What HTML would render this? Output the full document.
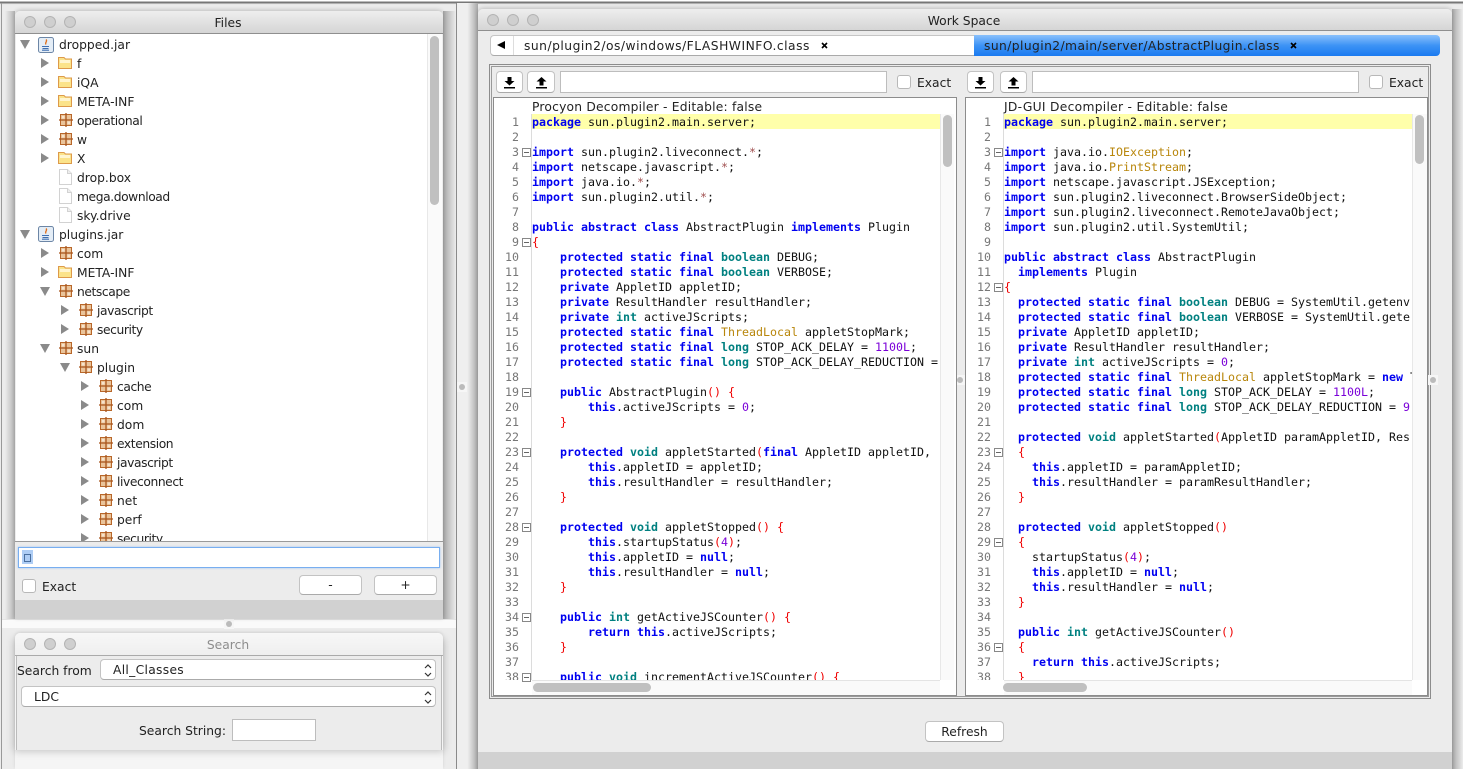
<!DOCTYPE html>
<html><head><meta charset="utf-8"><style>
html,body{margin:0;padding:0;width:1463px;height:769px;overflow:hidden;background:#ececec}
body{position:relative;font:12.3px "DejaVu Sans","Liberation Sans",sans-serif;color:#222}
.a{position:absolute;box-sizing:border-box}
.t{position:absolute;white-space:nowrap;line-height:16px}
.win{box-shadow:0 -1px 4px 0 rgba(0,0,0,.2)}
.bar{position:absolute;border-radius:5px 5px 0 0;background:linear-gradient(#eee,#d5d5d5);border-bottom:1px solid #8f8f8f;box-sizing:border-box}
.dot{position:absolute;width:12px;height:12px;border-radius:50%;background:#cfcfcf;border:1px solid #b4b4b4;box-sizing:border-box}
.btn{position:absolute;box-sizing:border-box;background:#fff;border:1px solid #c3c3c3;border-bottom-color:#aaa;border-radius:4px;text-align:center;line-height:18px}
.inp{position:absolute;box-sizing:border-box;background:#fff;border:1px solid #bdbdbd}
.cb{position:absolute;box-sizing:border-box;width:14px;height:14px;background:#fff;border:1px solid #b8b8b8;border-radius:3px}
.r{position:absolute;height:19px;line-height:19px;white-space:nowrap;margin-top:1px}
.n{letter-spacing:-.42px}
.ar{position:absolute;width:0;height:0;border-left:8px solid #8a8a8a;border-top:5px solid transparent;border-bottom:5px solid transparent}
.dn{position:absolute;width:0;height:0;border-top:9px solid #8a8a8a;border-left:5.5px solid transparent;border-right:5.5px solid transparent}
svg{position:absolute;overflow:visible}
pre{position:absolute;margin:0;font:11.63px/15px "DejaVu Sans Mono","Liberation Mono",monospace;color:#111;overflow:hidden;white-space:pre}
.g{color:#777;text-align:right}
b{color:#0000f0}
b.y{color:#008080}
i{font-style:normal;color:#b8860b}
u{text-decoration:none;color:#f00000}
s{text-decoration:none;color:#7a00d8}
em{font-style:normal;color:#a05050}
.f{position:absolute;width:9px;height:9px;box-sizing:border-box;border:1px solid #888;background:#fff}
.f:after{content:"";position:absolute;left:1px;top:3px;width:5px;height:1px;background:#666}
.sp{position:absolute;width:10px;height:10px;background:#f6f6f6}
.sp:after{content:"";position:absolute;left:2px;top:2px;width:6px;height:6px;border-radius:50%;background:#bbb}
</style></head><body>
<svg width="0" height="0" style="position:absolute"><defs>
<g id="pkg"><rect x="1.5" y="1.5" width="11" height="11" fill="#eac49a" stroke="#b8672a"/><path d="M7 0V14M0 7H14" stroke="#a8551c" stroke-width="1.3" fill="none"/><rect x="3" y="3" width="2.5" height="2.5" fill="#f7e3cc"/><rect x="8.5" y="8.5" width="2.5" height="2.5" fill="#f7e3cc"/></g>
<g id="fol"><path d="M.5 2.5H6L7.5 4H13.5V13.5H.5Z" fill="#fbe38a" stroke="#dd9a4a"/><rect x="2" y="5" width="10" height="3" fill="#fff5cf"/></g>
<g id="doc"><path d="M1.5 .5H9.5L13.5 4.5V15.5H1.5Z" fill="#fff" stroke="#d2d2d2"/><path d="M9.5 .5V4.5H13.5" fill="#eee" stroke="#d2d2d2"/></g>
<g id="jar"><rect x=".5" y=".5" width="15" height="15" rx="2" fill="#e4edf6" stroke="#6c86a6"/><path d="M8 2.5C10 4.5 6.5 5 8 7.5" stroke="#e0701c" stroke-width="1.3" fill="none"/><path d="M4 9.5H11M4.5 11.5H10.5M4 13.2H11" stroke="#3f6fb0" stroke-width="1.1" fill="none"/></g>
<g id="dl"><path d="M5.5 1H9.5V5H12.5L7.5 9.5L2.5 5H5.5ZM2 11H13V12.5H2Z" fill="#000"/></g>
<g id="ul"><path d="M7.5 1L12.5 5.5H9.5V9.5H5.5V5.5H2.5ZM2 11H13V12.5H2Z" fill="#000"/></g>
<g id="ud"><path d="M1 4L4 1L7 4M1 9L4 12L7 9" stroke="#333" stroke-width="1.2" fill="none"/></g>
</defs></svg>

<!-- backdrop -->
<div class="a" style="left:0;top:0;width:1463px;height:5px;background:linear-gradient(#fff 0,#fff 1px,#777 2px,#777 3px,#e8e8e8 4px)"></div>
<div class="a" style="left:1px;top:3px;width:1px;height:766px;background:#999"></div>
<div class="a" style="left:5px;top:11px;width:10px;height:608px;background:linear-gradient(90deg,#ececec,#b4b4b4)"></div>
<div class="a" style="left:443px;top:11px;width:13px;height:608px;background:linear-gradient(90deg,#a6a6a6,#ececec)"></div>
<div class="a" style="left:456px;top:3px;width:1px;height:766px;background:#8a8a8a"></div>
<div class="a" style="left:457px;top:3px;width:21px;height:766px;background:linear-gradient(90deg,#efefef 50%,#a8a8a8)"></div>
<div class="a" style="left:1452px;top:9px;width:11px;height:760px;background:linear-gradient(90deg,#a8a8a8,#ececec)"></div>
<div class="a" style="left:2px;top:619px;width:454px;height:9px;background:#fafafa;border-top:1px solid #e4e4e4"></div>
<div class="sp" style="left:224px;top:619px"></div>
<div class="sp" style="left:457px;top:382px"></div>

<!-- FILES WINDOW -->
<div class="a win" style="left:15px;top:11px;width:428px;height:608px;background:#ececec;border-radius:5px 5px 0 0"></div>
<div class="bar" style="left:15px;top:11px;width:428px;height:23px"></div>
<div class="dot" style="left:24px;top:16px"></div><div class="dot" style="left:44px;top:16px"></div><div class="dot" style="left:64px;top:16px"></div>
<div class="t" style="left:15px;width:426px;text-align:center;top:15px">Files</div>
<div class="a" style="left:16px;top:34px;width:426px;height:507px;background:#fff;overflow:hidden">
<div class="a" style="left:411px;top:0;width:15px;height:507px;background:#fafafa;border-left:1px solid #e8e8e8"></div>
<div class="a" style="left:414px;top:2px;width:9px;height:169px;background:#c0c0c0;border-radius:5px"></div>
<div style="position:absolute;left:-16px;top:-34px;width:426px;height:600px">
<div class="dn" style="left:20px;top:40px"></div><svg style="left:38px;top:37px" width="16" height="16"><use href="#jar"/></svg><div class="r" style="left:59px;top:35px">dropped.jar</div>
<div class="ar" style="left:41px;top:58px"></div><svg style="left:58px;top:55px" width="15" height="16"><use href="#fol"/></svg><div class="r" style="left:77px;top:54px">f</div>
<div class="ar" style="left:41px;top:77px"></div><svg style="left:58px;top:74px" width="15" height="16"><use href="#fol"/></svg><div class="r" style="left:77px;top:73px">iQA</div>
<div class="ar" style="left:41px;top:96px"></div><svg style="left:58px;top:93px" width="15" height="16"><use href="#fol"/></svg><div class="r" style="left:77px;top:92px">META-INF</div>
<div class="ar" style="left:41px;top:115px"></div><svg style="left:59px;top:113px" width="14" height="14"><use href="#pkg"/></svg><div class="r n" style="left:77px;top:111px">operational</div>
<div class="ar" style="left:41px;top:134px"></div><svg style="left:59px;top:132px" width="14" height="14"><use href="#pkg"/></svg><div class="r" style="left:77px;top:130px">w</div>
<div class="ar" style="left:41px;top:153px"></div><svg style="left:58px;top:150px" width="15" height="16"><use href="#fol"/></svg><div class="r" style="left:77px;top:149px">X</div>
<svg style="left:58px;top:169px" width="15" height="16"><use href="#doc"/></svg><div class="r" style="left:77px;top:168px">drop.box</div>
<svg style="left:58px;top:188px" width="15" height="16"><use href="#doc"/></svg><div class="r n" style="left:77px;top:187px">mega.download</div>
<svg style="left:58px;top:207px" width="15" height="16"><use href="#doc"/></svg><div class="r" style="left:77px;top:206px">sky.drive</div>
<div class="dn" style="left:20px;top:230px"></div><svg style="left:38px;top:226px" width="16" height="16"><use href="#jar"/></svg><div class="r" style="left:59px;top:225px">plugins.jar</div>
<div class="ar" style="left:41px;top:248px"></div><svg style="left:59px;top:246px" width="14" height="14"><use href="#pkg"/></svg><div class="r" style="left:77px;top:244px">com</div>
<div class="ar" style="left:41px;top:267px"></div><svg style="left:58px;top:264px" width="15" height="16"><use href="#fol"/></svg><div class="r" style="left:77px;top:263px">META-INF</div>
<div class="dn" style="left:40px;top:287px"></div><svg style="left:59px;top:284px" width="14" height="14"><use href="#pkg"/></svg><div class="r n" style="left:77px;top:282px">netscape</div>
<div class="ar" style="left:61px;top:305px"></div><svg style="left:79px;top:303px" width="14" height="14"><use href="#pkg"/></svg><div class="r n" style="left:97px;top:301px">javascript</div>
<div class="ar" style="left:61px;top:324px"></div><svg style="left:79px;top:322px" width="14" height="14"><use href="#pkg"/></svg><div class="r n" style="left:97px;top:320px">security</div>
<div class="dn" style="left:40px;top:344px"></div><svg style="left:59px;top:341px" width="14" height="14"><use href="#pkg"/></svg><div class="r" style="left:77px;top:339px">sun</div>
<div class="dn" style="left:60px;top:363px"></div><svg style="left:79px;top:360px" width="14" height="14"><use href="#pkg"/></svg><div class="r" style="left:97px;top:358px">plugin</div>
<div class="ar" style="left:81px;top:381px"></div><svg style="left:99px;top:379px" width="14" height="14"><use href="#pkg"/></svg><div class="r n" style="left:117px;top:377px">cache</div>
<div class="ar" style="left:81px;top:400px"></div><svg style="left:99px;top:398px" width="14" height="14"><use href="#pkg"/></svg><div class="r" style="left:117px;top:396px">com</div>
<div class="ar" style="left:81px;top:419px"></div><svg style="left:99px;top:417px" width="14" height="14"><use href="#pkg"/></svg><div class="r" style="left:117px;top:415px">dom</div>
<div class="ar" style="left:81px;top:438px"></div><svg style="left:99px;top:436px" width="14" height="14"><use href="#pkg"/></svg><div class="r n" style="left:117px;top:434px">extension</div>
<div class="ar" style="left:81px;top:457px"></div><svg style="left:99px;top:455px" width="14" height="14"><use href="#pkg"/></svg><div class="r n" style="left:117px;top:453px">javascript</div>
<div class="ar" style="left:81px;top:476px"></div><svg style="left:99px;top:474px" width="14" height="14"><use href="#pkg"/></svg><div class="r n" style="left:117px;top:472px">liveconnect</div>
<div class="ar" style="left:81px;top:495px"></div><svg style="left:99px;top:493px" width="14" height="14"><use href="#pkg"/></svg><div class="r" style="left:117px;top:491px">net</div>
<div class="ar" style="left:81px;top:514px"></div><svg style="left:99px;top:512px" width="14" height="14"><use href="#pkg"/></svg><div class="r" style="left:117px;top:510px">perf</div>
<div class="ar" style="left:81px;top:533px"></div><svg style="left:99px;top:531px" width="14" height="14"><use href="#pkg"/></svg><div class="r n" style="left:117px;top:529px">security</div>
</div></div>
<div class="a" style="left:15px;top:541px;width:428px;height:1px;background:#9a9a9a"></div>
<div class="a" style="left:18px;top:547px;width:422px;height:21px;background:#fff;border:1px solid #78aef0;box-shadow:0 0 2px #9cc4f5"></div>
<div class="a" style="left:22px;top:550px;width:11px;height:14px;background:#aecdf5"></div>
<div class="a" style="left:24px;top:554px;width:7px;height:8px;border:1px solid #4a6f9f"></div>
<div class="cb" style="left:22px;top:579px"></div>
<div class="t" style="left:42px;top:579px">Exact</div>
<div class="btn" style="left:299px;top:575px;width:63px;height:20px">-</div>
<div class="btn" style="left:374px;top:575px;width:63px;height:20px">+</div>
<div class="a" style="left:15px;top:600px;width:428px;height:19px;background:#d1d1d1"></div>

<!-- SEARCH WINDOW -->
<div class="a" style="left:15px;top:633px;width:428px;height:136px;background:#f5f5f5;border-radius:5px 5px 0 0;box-shadow:0 -1px 3px rgba(0,0,0,.1)"></div>
<div class="a" style="left:15px;top:640px;width:428px;height:110px;box-shadow:0 0 8px 1px rgba(0,0,0,.22)"></div>
<div class="bar" style="left:15px;top:633px;width:428px;height:23px;background:linear-gradient(#f7f7f7,#efefef);border-bottom:1px solid #aaa"></div>
<div class="dot" style="left:24px;top:638px"></div><div class="dot" style="left:44px;top:638px"></div><div class="dot" style="left:64px;top:638px"></div>
<div class="t" style="left:15px;width:426px;text-align:center;top:637px;color:#8d8d8d">Search</div>
<div class="a" style="left:16px;top:656px;width:426px;height:94px;background:#ececec;border-left:1px solid #bbb;border-right:1px solid #bbb"></div>
<div class="t" style="left:17px;top:663px">Search from</div>
<div class="btn" style="left:100px;top:659px;width:336px;height:21px;text-align:left;padding-left:12px;line-height:20px;letter-spacing:.3px">All_Classes<svg style="left:323px;top:4px" width="8" height="13"><use href="#ud"/></svg></div>
<div class="btn" style="left:21px;top:686px;width:415px;height:21px;text-align:left;padding-left:12px;line-height:21px">LDC<svg style="left:402px;top:4px" width="8" height="13"><use href="#ud"/></svg></div>
<div class="t" style="left:139px;top:723px">Search String:</div>
<div class="inp" style="left:232px;top:719px;width:84px;height:22px"></div>

<!-- WORK SPACE WINDOW -->
<div class="a win" style="left:478px;top:9px;width:974px;height:770px;background:#ececec;border-radius:5px 5px 0 0"></div>
<div class="bar" style="left:478px;top:9px;width:974px;height:22px"></div>
<div class="dot" style="left:487px;top:14px"></div><div class="dot" style="left:507px;top:14px"></div><div class="dot" style="left:527px;top:14px"></div>
<div class="t" style="left:478px;width:972px;text-align:center;top:13px">Work Space</div>
<div class="a" style="left:490px;top:35px;width:484px;height:21px;background:#fff;border:1px solid #c6c6c6;border-right:0;border-bottom-color:#aaa;border-radius:4px 0 0 4px"></div>
<div class="a" style="left:513px;top:36px;width:1px;height:19px;background:#ddd"></div>
<div class="a" style="left:497px;top:41px;width:0;height:0;border-right:8px solid #000;border-top:4.5px solid transparent;border-bottom:4.5px solid transparent"></div>
<div class="t" style="left:524px;top:38px;letter-spacing:.49px">sun/plugin2/os/windows/FLASHWINFO.class</div>
<svg style="left:821px;top:42px" width="7" height="7"><path d="M1 1L6 6M6 1L1 6" stroke="#000" stroke-width="1.6"/></svg>
<div class="a" style="left:974px;top:35px;width:466px;height:21px;background:linear-gradient(#8ac0fb,#3d93f5 50%,#1a7af0);border-radius:0 4px 4px 0"></div>
<div class="t" style="left:984px;top:38px;letter-spacing:.41px">sun/plugin2/main/server/AbstractPlugin.class</div>
<svg style="left:1290px;top:42px" width="7" height="7"><path d="M1 1L6 6M6 1L1 6" stroke="#000" stroke-width="1.6"/></svg>

<div class="a" style="left:489px;top:64px;width:942px;height:635px;border:1px solid #8c8c8c"></div>
<div class="a" style="left:491px;top:66px;width:938px;height:631px;border:1px solid #9a9a9a"></div>

<div class="btn" style="left:496px;top:71px;width:27px;height:22px"></div><svg style="left:502px;top:76px" width="15" height="13"><use href="#dl"/></svg>
<div class="btn" style="left:527px;top:71px;width:28px;height:22px"></div><svg style="left:534px;top:76px" width="15" height="13"><use href="#ul"/></svg>
<div class="inp" style="left:560px;top:71px;width:327px;height:22px"></div>
<div class="cb" style="left:897px;top:75px"></div>
<div class="t" style="left:917px;top:75px">Exact</div>

<div class="btn" style="left:967px;top:71px;width:27px;height:22px"></div><svg style="left:973px;top:76px" width="15" height="13"><use href="#dl"/></svg>
<div class="btn" style="left:1000px;top:71px;width:27px;height:22px"></div><svg style="left:1006px;top:76px" width="15" height="13"><use href="#ul"/></svg>
<div class="inp" style="left:1032px;top:71px;width:327px;height:22px"></div>
<div class="cb" style="left:1369px;top:75px"></div>
<div class="t" style="left:1389px;top:75px">Exact</div>

<div class="sp" style="left:955px;top:375px"></div>
<div class="sp" style="left:1428px;top:375px"></div>

<!-- LEFT EDITOR -->
<div class="a" style="left:493px;top:97px;width:464px;height:599px;background:#fff;border:1px solid #8c8c8c"></div>
<div class="t" style="left:532px;top:99px;letter-spacing:.2px">Procyon Decompiler - Editable: false</div>
<div class="a" style="left:531px;top:114px;width:1px;height:566px;background:#dcdcdc"></div>
<div class="a" style="left:532px;top:114px;width:408px;height:15px;background:#ffffaa"></div>
<div class="a" style="left:940px;top:114px;width:14px;height:566px;background:#fafafa;border-left:1px solid #e8e8e8"></div>
<div class="a" style="left:943px;top:115px;width:9px;height:52px;background:#c0c0c0;border-radius:5px"></div>
<div class="a" style="left:532px;top:680px;width:408px;height:15px;background:#fafafa;border-top:1px solid #e4e4e4"></div>
<div class="a" style="left:533px;top:683px;width:118px;height:9px;background:#c0c0c0;border-radius:5px"></div>
<pre class="g" style="left:495px;top:115px;width:24px;height:565px">1
2
3
4
5
6
7
8
9
10
11
12
13
14
15
16
17
18
19
20
21
22
23
24
25
26
27
28
29
30
31
32
33
34
35
36
37
38</pre>
<div class="f" style="left:522px;top:148px"></div><div class="f" style="left:522px;top:238px"></div><div class="f" style="left:522px;top:388px"></div><div class="f" style="left:522px;top:448px"></div><div class="f" style="left:522px;top:523px"></div><div class="f" style="left:522px;top:613px"></div><div class="f" style="left:522px;top:673px"></div>
<pre style="left:532px;top:115px;width:408px;height:565px"><b>package</b> sun.plugin2.main.server;

<b>import</b> sun.plugin2.liveconnect.<em>*</em>;
<b>import</b> netscape.javascript.<em>*</em>;
<b>import</b> java.io.<em>*</em>;
<b>import</b> sun.plugin2.util.<em>*</em>;

<b>public abstract class</b> AbstractPlugin <b>implements</b> Plugin
<u>{</u>
    <b>protected static final</b> <b class="y">boolean</b> DEBUG;
    <b>protected static final</b> <b class="y">boolean</b> VERBOSE;
    <b>private</b> AppletID appletID;
    <b>private</b> ResultHandler resultHandler;
    <b>private</b> <b class="y">int</b> activeJScripts;
    <b>protected static final</b> <i>ThreadLocal</i> appletStopMark;
    <b>protected static final</b> <b class="y">long</b> STOP_ACK_DELAY = <s>1100L</s>;
    <b>protected static final</b> <b class="y">long</b> STOP_ACK_DELAY_REDUCTION = <s>9</s>

    <b>public</b> AbstractPlugin<u>()</u> <u>{</u>
        <b>this</b>.activeJScripts = <s>0</s>;
    <u>}</u>

    <b>protected</b> <b class="y">void</b> appletStarted<u>(</u><b>final</b> AppletID appletID, 
        <b>this</b>.appletID = appletID;
        <b>this</b>.resultHandler = resultHandler;
    <u>}</u>

    <b>protected</b> <b class="y">void</b> appletStopped<u>()</u> <u>{</u>
        <b>this</b>.startupStatus<u>(</u><s>4</s><u>)</u>;
        <b>this</b>.appletID = <b>null</b>;
        <b>this</b>.resultHandler = <b>null</b>;
    <u>}</u>

    <b>public</b> <b class="y">int</b> getActiveJSCounter<u>()</u> <u>{</u>
        <b>return</b> <b>this</b>.activeJScripts;
    <u>}</u>

    <b>public</b> <b class="y">void</b> incrementActiveJSCounter<u>()</u> <u>{</u></pre>

<!-- RIGHT EDITOR -->
<div class="a" style="left:965px;top:97px;width:463px;height:599px;background:#fff;border:1px solid #8c8c8c"></div>
<div class="t" style="left:1004px;top:99px;letter-spacing:.28px">JD-GUI Decompiler - Editable: false</div>
<div class="a" style="left:1003px;top:114px;width:1px;height:566px;background:#dcdcdc"></div>
<div class="a" style="left:1004px;top:114px;width:408px;height:15px;background:#ffffaa"></div>
<div class="a" style="left:1412px;top:114px;width:15px;height:566px;background:#fafafa;border-left:1px solid #e8e8e8"></div>
<div class="a" style="left:1415px;top:115px;width:9px;height:49px;background:#c0c0c0;border-radius:5px"></div>
<div class="a" style="left:1004px;top:680px;width:408px;height:15px;background:#fafafa;border-top:1px solid #e4e4e4"></div>
<div class="a" style="left:1003px;top:683px;width:84px;height:9px;background:#c0c0c0;border-radius:5px"></div>
<pre class="g" style="left:967px;top:115px;width:24px;height:565px">1
2
3
4
5
6
7
8
9
10
11
12
13
14
15
16
17
18
19
20
21
22
23
24
25
26
27
28
29
30
31
32
33
34
35
36
37
38</pre>
<div class="f" style="left:994px;top:148px"></div><div class="f" style="left:994px;top:283px"></div><div class="f" style="left:994px;top:448px"></div><div class="f" style="left:994px;top:538px"></div><div class="f" style="left:994px;top:643px"></div>
<pre style="left:1004px;top:115px;width:408px;height:565px"><b>package</b> sun.plugin2.main.server;

<b>import</b> java.io.<i>IOException</i>;
<b>import</b> java.io.<i>PrintStream</i>;
<b>import</b> netscape.javascript.JSException;
<b>import</b> sun.plugin2.liveconnect.BrowserSideObject;
<b>import</b> sun.plugin2.liveconnect.RemoteJavaObject;
<b>import</b> sun.plugin2.util.SystemUtil;

<b>public abstract class</b> AbstractPlugin
  <b>implements</b> Plugin
<u>{</u>
  <b>protected static final</b> <b class="y">boolean</b> DEBUG = SystemUtil.getenv
  <b>protected static final</b> <b class="y">boolean</b> VERBOSE = SystemUtil.gete
  <b>private</b> AppletID appletID;
  <b>private</b> ResultHandler resultHandler;
  <b>private</b> <b class="y">int</b> activeJScripts = <s>0</s>;
  <b>protected static final</b> <i>ThreadLocal</i> appletStopMark = <b>new</b> T
  <b>protected static final</b> <b class="y">long</b> STOP_ACK_DELAY = <s>1100L</s>;
  <b>protected static final</b> <b class="y">long</b> STOP_ACK_DELAY_REDUCTION = <s>9</s>

  <b>protected</b> <b class="y">void</b> appletStarted<u>(</u>AppletID paramAppletID, Res
  <u>{</u>
    <b>this</b>.appletID = paramAppletID;
    <b>this</b>.resultHandler = paramResultHandler;
  <u>}</u>

  <b>protected</b> <b class="y">void</b> appletStopped<u>()</u>
  <u>{</u>
    startupStatus<u>(</u><s>4</s><u>)</u>;
    <b>this</b>.appletID = <b>null</b>;
    <b>this</b>.resultHandler = <b>null</b>;
  <u>}</u>

  <b>public</b> <b class="y">int</b> getActiveJSCounter<u>()</u>
  <u>{</u>
    <b>return</b> <b>this</b>.activeJScripts;
  <u>}</u></pre>

<div class="btn" style="left:925px;top:721px;width:79px;height:21px;line-height:21px">Refresh</div>
<div class="a" style="left:478px;top:752px;width:974px;height:17px;background:#d1d1d1"></div>
</body></html>
